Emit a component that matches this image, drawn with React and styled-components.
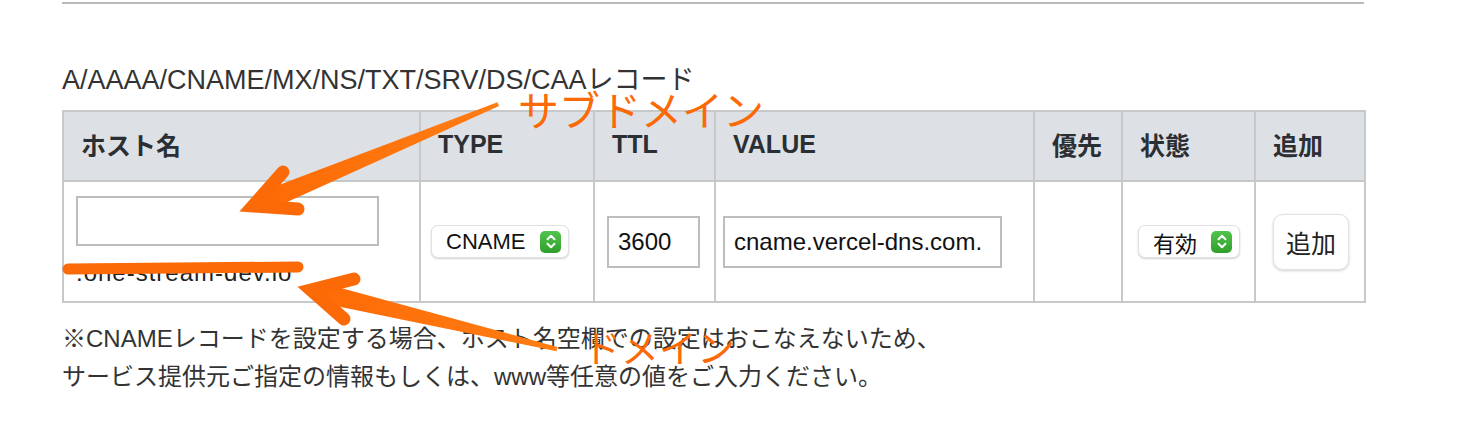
import React from 'react';
import styled, { createGlobalStyle } from 'styled-components';

const ORANGE = '#fb6a07';

const GlobalStyle = createGlobalStyle`
    body {
        margin: 0;
        background: #ffffff;
        font-family: "Liberation Sans", "Noto Sans CJK JP", sans-serif;
    }
`;

/* Page */
const Page = styled.div`
    position: relative;
    box-sizing: border-box;
    width: 1464px;
    height: 434px;
    overflow: hidden;
    padding: 2px 100px 0 62px;
`;

const Rule = styled.div`
    height: 2px;
    background: #b9babe;
`;

const Heading = styled.h3`
    margin: 59px 0 13px;
    font-size: 27px;
    line-height: 34px;
    font-weight: 400;
    color: #333333;
`;

/* Record table */
const Table = styled.table`
    width: 1302px;
    table-layout: fixed;
    border-collapse: collapse;
    border: 2px solid #c7c8ca;
`;

const HeadCell = styled.th`
    height: 64px;
    padding: 0 17px 4px;
    background: #dde1e6;
    border: 2px solid #c7c8ca;
    text-align: left;
    font-size: 25px;
    font-weight: 700;
    color: #2b2f34;
`;

const Cell = styled.td`
    height: 119px;
    padding: 0 0 0 ${props => props.$pad}px;
    border: 2px solid #c7c8ca;
    vertical-align: middle;
`;

const TextInput = styled.input`
    display: block;
    box-sizing: border-box;
    width: ${props => props.$w}px;
    height: ${props => props.$h}px;
    padding: 0 9px;
    border: 2px solid #bdbdbd;
    border-radius: 0;
    background: #ffffff;
    font-family: "Liberation Sans", "Noto Sans CJK JP", sans-serif;
    font-size: 24px;
    color: #111111;
    outline: none;
`;

const Domain = styled.div`
    margin-top: 12px;
    font-size: 24px;
    line-height: 30px;
    letter-spacing: 1px;
    color: #222222;
`;

const SelectBox = styled.div`
    box-sizing: border-box;
    display: flex;
    align-items: center;
    justify-content: space-between;
    width: ${props => props.$w}px;
    height: 33px;
    padding: 0 7px 0 14px;
    border: 1px solid #e1e1e1;
    border-radius: 7px;
    background: #ffffff;
    box-shadow: 0 1px 2px rgba(0, 0, 0, 0.18);
    font-size: 22px;
    color: #111111;
`;

const Stepper = styled.span`
    display: flex;
    align-items: center;
    justify-content: center;
    width: 21px;
    height: 22px;
    border-radius: 5px;
    background: linear-gradient(#52c34d, #2f9f2c);
`;

const AddButton = styled.button`
    box-sizing: border-box;
    width: 76px;
    height: 56px;
    padding: 0;
    border: 1px solid #e3e3e3;
    border-radius: 10px;
    background: #ffffff;
    box-shadow: 0 1px 3px rgba(0, 0, 0, 0.18);
    font-family: "Noto Sans CJK JP", sans-serif;
    font-size: 25px;
    color: #222222;
`;

const Notes = styled.p`
    margin: 17px 0 0;
    font-size: 24px;
    line-height: 38px;
    color: #333333;
`;

/* Annotations drawn over the page */
const Overlay = styled.svg`
    position: absolute;
    top: 0;
    left: 0;
    pointer-events: none;
`;

const Label = styled.span`
    position: absolute;
    left: ${props => props.$x}px;
    top: ${props => props.$y}px;
    font-family: "Noto Sans CJK JP", sans-serif;
    font-size: ${props => props.$size}px;
    line-height: 1;
    color: ${ORANGE};
    white-space: nowrap;
    pointer-events: none;
`;

const Select = ({ label, width }) => (
    <SelectBox $w={width}>
        <span>{label}</span>
        <Stepper>
            <svg width="12" height="17" viewBox="0 0 12 17" fill="none" stroke="#ffffff" strokeWidth="2" strokeLinecap="round" strokeLinejoin="round">
                <path d="M2.5 6.3 L6 2.8 L9.5 6.3" />
                <path d="M2.5 10.7 L6 14.2 L9.5 10.7" />
            </svg>
        </Stepper>
    </SelectBox>
);

const Arrow = ({ shaft, head }) => (
    <g>
        <polygon points={shaft} fill="url(#brush)" />
        <path d={head} fill="none" stroke={ORANGE} strokeWidth="13" strokeLinecap="round" strokeLinejoin="miter" />
    </g>
);

export default function App() {
    return (
        <Page>
            <GlobalStyle />
            <Rule />
            <Heading>A/AAAA/CNAME/MX/NS/TXT/SRV/DS/CAAレコード</Heading>
            <Table>
                <colgroup>
                    <col style={{ width: 357 }} />
                    <col style={{ width: 174 }} />
                    <col style={{ width: 121 }} />
                    <col style={{ width: 319 }} />
                    <col style={{ width: 88 }} />
                    <col style={{ width: 133 }} />
                    <col style={{ width: 110 }} />
                </colgroup>
                <thead>
                    <tr>
                        <HeadCell>ホスト名</HeadCell>
                        <HeadCell>TYPE</HeadCell>
                        <HeadCell>TTL</HeadCell>
                        <HeadCell>VALUE</HeadCell>
                        <HeadCell>優先</HeadCell>
                        <HeadCell>状態</HeadCell>
                        <HeadCell>追加</HeadCell>
                    </tr>
                </thead>
                <tbody>
                    <tr>
                        <Cell $pad={12}>
                            <TextInput $w={303} $h={50} defaultValue="" readOnly />
                            <Domain>.one-stream-dev.io</Domain>
                        </Cell>
                        <Cell $pad={10}>
                            <Select label="CNAME" width={138} />
                        </Cell>
                        <Cell $pad={12}>
                            <TextInput $w={93} $h={52} defaultValue="3600" readOnly />
                        </Cell>
                        <Cell $pad={7}>
                            <TextInput $w={279} $h={52} defaultValue="cname.vercel-dns.com." readOnly />
                        </Cell>
                        <Cell $pad={0} />
                        <Cell $pad={15}>
                            <Select label="有効" width={102} />
                        </Cell>
                        <Cell $pad={17}>
                            <AddButton>追加</AddButton>
                        </Cell>
                    </tr>
                </tbody>
            </Table>
            <Notes>
                ※CNAMEレコードを設定する場合、ホスト名空欄での設定はおこなえないため、
                <br />
                サービス提供元ご指定の情報もしくは、www等任意の値をご入力ください。
            </Notes>

            <Overlay width="1464" height="434" viewBox="0 0 1464 434">
                <defs>
                    <linearGradient id="brush" x1="0" y1="0" x2="1" y2="0">
                        <stop offset="0" stopColor="#fd6a05" />
                        <stop offset="1" stopColor="#ff7d14" />
                    </linearGradient>
                </defs>
                <line x1="68" y1="269" x2="298" y2="267" stroke={ORANGE} strokeWidth="11" strokeLinecap="round" />
                <Arrow
                    shaft="497.4,102.2 499,106 274,208 254,206 267,189.5"
                    head="M283 172 L253 206 L298 209"
                />
                <Arrow
                    shaft="557.5,347 556.5,351.3 328.6,304.4 310,290.5 332.6,285.8"
                    head="M354 279 L311 290 L344 319"
                />
            </Overlay>
            <Label $x={518} $y={88} $size={41}>サブドメイン</Label>
            <Label $x={583} $y={327} $size={38}>ドメイン</Label>
        </Page>
    );
}
